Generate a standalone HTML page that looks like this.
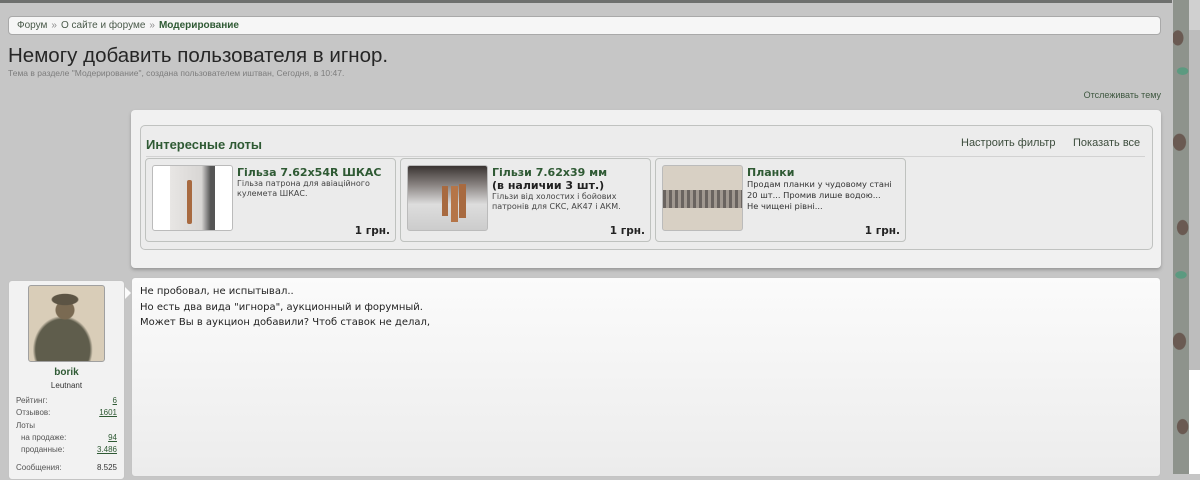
<!DOCTYPE html>
<html><head><meta charset="utf-8"><style>
*{margin:0;padding:0;box-sizing:border-box}
body{width:1200px;height:474px;overflow:hidden;background:#c6c6c6;font-family:"Liberation Sans","DejaVu Sans",sans-serif;position:relative}
.topbar{position:absolute;left:0;top:0;width:1172px;height:3px;background:#6e706e}
.camo{position:absolute;left:1173px;top:0;width:16px;height:474px;background:
radial-gradient(ellipse 6px 8px at 30% 8%,#6a5a52 90%,transparent),
radial-gradient(ellipse 6px 4px at 60% 15%,#5c9a80 90%,transparent),
radial-gradient(ellipse 7px 9px at 40% 30%,#6a5a52 90%,transparent),
radial-gradient(ellipse 6px 8px at 60% 48%,#6a5a52 90%,transparent),
radial-gradient(ellipse 6px 4px at 50% 58%,#5c9a80 90%,transparent),
radial-gradient(ellipse 7px 9px at 40% 72%,#6a5a52 90%,transparent),
radial-gradient(ellipse 6px 8px at 60% 90%,#6a5a52 90%,transparent),#8e938c}
.rs{position:absolute;left:1189px;top:0;width:11px;height:474px;background:linear-gradient(#d0d0d0 0 30px,#bdbdbd 30px 370px,#fff 370px)}
.bc{position:absolute;left:8px;top:16px;width:1153px;height:19px;background:#f6f6f6;border:1px solid #a9a9a9;border-radius:4px;font-size:10px;color:#4a5a4a;padding:3px 0 0 8px;white-space:nowrap}
.bc .s{color:#8a8a8a;margin:0 4px}
.bc b{color:#2f5a34}
h1{position:absolute;left:8px;top:44px;font-weight:normal;font-size:20.5px;color:#262626}
.sub{position:absolute;left:8px;top:68px;font-size:8.5px;color:#7d7d7d}
.watch{position:absolute;right:39px;top:90px;font-size:9px;color:#3f5840}
.lots{position:absolute;left:131px;top:110px;width:1030px;height:158px;background:#f1f1f1;border-radius:4px;box-shadow:0 2px 3px #999}
.inner{position:absolute;left:9px;top:15px;width:1013px;height:125px;border:1px solid #c0c2c0;border-radius:5px;background:#ececec}
.hd{position:absolute;left:5px;top:11px;font-size:13px;font-weight:bold;color:#2f5a34}
.hl{position:absolute;left:5px;top:30px;width:999px;border-top:1px solid #d2d2d2}
.fl{position:absolute;top:11px;font-size:11px;color:#3c4c3c}
.item{position:absolute;top:32px;width:251px;height:84px;border:1px solid #bfc2bf;border-radius:4px;background:#ebebeb}
.th{position:absolute;left:6px;top:6px;width:81px;height:66px;border:1px solid #bbb;border-radius:3px;background:#fff;overflow:hidden}
.it{position:absolute;left:91px;top:7px;font-size:11px;font-weight:bold;color:#2f5a34;font-family:"DejaVu Sans",sans-serif}
.ds{font-size:8px;color:#444;font-family:"DejaVu Sans",sans-serif;font-weight:normal;line-height:10px}
.pr{position:absolute;right:5px;bottom:4px;font-size:10.5px;font-weight:bold;color:#222;font-family:"DejaVu Sans",sans-serif}
.user{position:absolute;left:8px;top:280px;width:117px;height:200px;background:#f2f2f2;border:1px solid #c4c4c4;border-radius:4px}
.ava{position:absolute;left:19px;top:4px;width:77px;height:77px;border:1px solid #a0a0a0;border-radius:3px;background:radial-gradient(ellipse 14px 6px at 48% 18%,#5c5444 90%,transparent),radial-gradient(circle at 48% 32%,#7a6a52 0 9px,transparent 10px),radial-gradient(ellipse 30px 34px at 45% 85%,#5f5d4c 90%,transparent),#d9cdb8}
.nm{position:absolute;top:86px;width:100%;text-align:center;font-size:10px;font-weight:bold;color:#2f5a34}
.rk{position:absolute;top:100px;width:100%;text-align:center;font-size:8px;color:#333}
.row{position:absolute;left:7px;width:101px;font-size:8px;color:#555}
.row span{position:absolute;right:0;color:#2f5a34;text-decoration:underline}
.post{position:absolute;left:131px;top:277px;width:1030px;height:200px;background:linear-gradient(#fbfbfb,#ececec);border:1px solid #c4c4c4;border-radius:4px;font-size:10px;color:#222;padding:6px 0 0 8px;line-height:15.5px;font-family:"DejaVu Sans",sans-serif}
.arr{position:absolute;left:125px;top:287px;width:0;height:0;border-top:6px solid transparent;border-bottom:6px solid transparent;border-left:6px solid #fbfbfb}
</style></head><body>
<div class="topbar"></div>
<div class="camo"></div><div class="rs"></div>
<div class="bc">Форум<span class="s">»</span>О сайте и форуме<span class="s">»</span><b>Модерирование</b></div>
<h1>Немогу добавить пользователя в игнор.</h1>
<div class="sub">Тема в разделе "Модерирование", создана пользователем иштван, Сегодня, в 10:47.</div>
<div class="watch">Отслеживать тему</div>
<div class="lots"><div class="inner">
<div class="hd">Интересные лоты</div>
<div class="fl" style="left:820px">Настроить фильтр</div>
<div class="fl" style="left:932px">Показать все</div>
<div class="hl"></div>
<div class="item" style="left:4px"><div class="th"><div style="position:absolute;left:17px;top:0;width:45px;height:66px;background:linear-gradient(90deg,#e8e6e4,#d8d6d4 70%,#555 90%)"></div><div style="position:absolute;left:34px;top:14px;width:5px;height:44px;background:#a86a40;border-radius:2px"></div></div>
<div class="it">Гільза 7.62x54R ШКАС<div class="ds">Гільза патрона для авіаційного<br>кулемета ШКАС.</div></div><div class="pr">1 грн.</div></div>
<div class="item" style="left:259px"><div class="th" style="background:linear-gradient(#3a3432,#8a8482 30%,#ddd 60%,#ccc)"><div style="position:absolute;left:34px;top:20px;width:6px;height:30px;background:#a86a40"></div><div style="position:absolute;left:43px;top:20px;width:7px;height:36px;background:#b57548"></div><div style="position:absolute;left:51px;top:18px;width:7px;height:34px;background:#a86a40"></div></div>
<div class="it">Гільзи 7.62x39 мм<br><span style="color:#222">(в наличии 3 шт.)</span><div class="ds">Гільзи від холостих і бойових<br>патронів для СКС, АК47 і АКМ.</div></div><div class="pr">1 грн.</div></div>
<div class="item" style="left:514px"><div class="th" style="background:#d8d0c4"><div style="position:absolute;left:0;top:24px;width:81px;height:18px;background:repeating-linear-gradient(90deg,#6a6460 0 3px,#a09890 3px 6px)"></div></div>
<div class="it">Планки<div class="ds" style="font-size:8.3px;line-height:11px;color:#333">Продам планки у чудовому стані<br>20 шт... Промив лише водою...<br>Не чищені рівні...</div></div><div class="pr">1 грн.</div></div>
</div></div>
<div class="user"><div class="ava"></div><div class="nm">borik</div><div class="rk">Leutnant</div>
<div class="row" style="top:115px">Рейтинг:<span>6</span></div>
<div class="row" style="top:127px">Отзывов:<span>1601</span></div>
<div class="row" style="top:140px">Лоты</div>
<div class="row" style="top:152px;padding-left:5px">на продаже:<span>94</span></div>
<div class="row" style="top:164px;padding-left:5px">проданные:<span>3.486</span></div>
<div class="row" style="top:182px">Сообщения:<span style="text-decoration:none;color:#333">8.525</span></div>
</div>
<div class="arr"></div>
<div class="post">Не пробовал, не испытывал..<br>Но есть два вида "игнора", аукционный и форумный.<br>Может Вы в аукцион добавили? Чтоб ставок не делал,</div>
</body></html>
